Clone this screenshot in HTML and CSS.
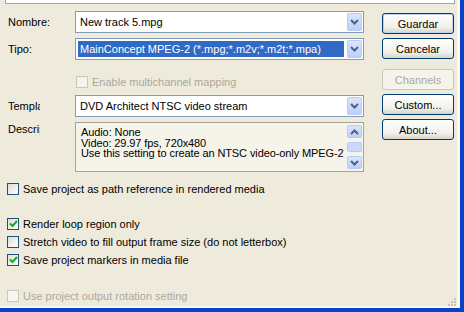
FILE: index.html
```html
<!DOCTYPE html>
<html lang="es">
<head>
    <meta charset="UTF-8">
    <title>Render As</title>
    <link rel="stylesheet" href="styles.css">
</head>
<body>
    <div class="window">
        <div class="prev-field"></div>

        <div class="main">
            <div class="form">
                <div class="row first">
                    <span class="label">Nombre:</span>
                    <div class="combo">
                        <span class="value">New track 5.mpg</span>
                        <span class="drop"><svg width="9" height="6" viewBox="0 0 9 6"><polyline points="1,1 4.5,4.5 8,1" fill="none" stroke="#4d6185" stroke-width="2"/></svg></span>
                    </div>
                </div>
                <div class="row">
                    <span class="label">Tipo:</span>
                    <div class="combo">
                        <span class="value selected">MainConcept MPEG-2 (*.mpg;*.m2v;*.m2t;*.mpa)</span>
                        <span class="drop"><svg width="9" height="6" viewBox="0 0 9 6"><polyline points="1,1 4.5,4.5 8,1" fill="none" stroke="#4d6185" stroke-width="2"/></svg></span>
                    </div>
                </div>
                <div class="check disabled multi">
                    <span class="box"></span>
                    <span>Enable multichannel mapping</span>
                </div>
                <div class="row template">
                    <span class="label"><span class="clip">Template:</span></span>
                    <div class="combo">
                        <span class="value">DVD Architect NTSC video stream</span>
                        <span class="drop"><svg width="9" height="6" viewBox="0 0 9 6"><polyline points="1,1 4.5,4.5 8,1" fill="none" stroke="#4d6185" stroke-width="2"/></svg></span>
                    </div>
                </div>
                <div class="row desc-row">
                    <span class="label"><span class="clip">Description:</span></span>
                    <div class="memo">
                        <div class="memo-text">
                            Audio: None<br>
                            Video: 29.97 fps, 720x480<br>
                            Use this setting to create an NTSC video-only MPEG-2
                        </div>
                        <div class="scroll">
                            <span class="sbtn"><svg width="9" height="6" viewBox="0 0 9 6"><polyline points="1,5 4.5,1.5 8,5" fill="none" stroke="#4d6185" stroke-width="2"/></svg></span>
                            <span class="thumb"></span>
                            <span class="sbtn"><svg width="9" height="6" viewBox="0 0 9 6"><polyline points="1,1 4.5,4.5 8,1" fill="none" stroke="#4d6185" stroke-width="2"/></svg></span>
                        </div>
                    </div>
                </div>
                <div class="check path">
                    <span class="box"></span>
                    <span>Save project as path reference in rendered media</span>
                </div>
            </div>

            <div class="buttons">
                <button class="btn default">Guardar</button>
                <button class="btn">Cancelar</button>
                <button class="btn off">Channels</button>
                <button class="btn">Custom...</button>
                <button class="btn">About...</button>
            </div>
        </div>

        <div class="options">
            <div class="check">
                <span class="box on"><svg width="9" height="8" viewBox="0 0 9 8"><polyline points="1,3.5 3.5,6 8,1" fill="none" stroke="#21a121" stroke-width="2"/></svg></span>
                <span>Render loop region only</span>
            </div>
            <div class="check">
                <span class="box"></span>
                <span>Stretch video to fill output frame size (do not letterbox)</span>
            </div>
            <div class="check">
                <span class="box on"><svg width="9" height="8" viewBox="0 0 9 8"><polyline points="1,3.5 3.5,6 8,1" fill="none" stroke="#21a121" stroke-width="2"/></svg></span>
                <span>Save project markers in media file</span>
            </div>
            <div class="check disabled rotation">
                <span class="box"></span>
                <span>Use project output rotation setting</span>
            </div>
        </div>

        <div class="grip">
            <svg width="10" height="10" viewBox="0 0 10 10" fill="#c4c1b3">
                <rect x="7" y="1" width="2" height="2"/>
                <rect x="4" y="4" width="2" height="2"/><rect x="7" y="4" width="2" height="2"/>
                <rect x="1" y="7" width="2" height="2"/><rect x="4" y="7" width="2" height="2"/><rect x="7" y="7" width="2" height="2"/>
            </svg>
        </div>
    </div>
</body>
</html>
```

FILE: styles.css
```css
body {
    margin: 0;
    font-family: 'Liberation Sans', Arial, sans-serif;
    font-size: 11px;
    color: #000;
    background-color: #0842c8;
}
.window {
    position: relative;
    box-sizing: border-box;
    width: 464px;
    height: 312px;
    background-color: #eeebdd;
    border-right: 4px solid #0842c8;
    border-bottom: 4px solid #0842c8;
    box-shadow: inset -3px -2px 0 #faf8f0;
    overflow: hidden;
}
.prev-field {
    width: 448px;
    height: 3px;
    margin-left: 5px;
    background: #fff;
    border: 1px solid #a5a49c;
    border-top: none;
}
.main {
    display: flex;
}
.form {
    width: 364px;
}
.row {
    display: flex;
    align-items: center;
    height: 22px;
    margin-top: 5px;
}
.row.first {
    margin-top: 7px;
}
.label {
    width: 75px;
    padding-left: 8px;
    box-sizing: border-box;
    white-space: nowrap;
    flex-shrink: 0;
}
.label .clip {
    display: block;
    width: 32px;
    overflow: hidden;
}
.combo {
    flex: 1;
    height: 22px;
    box-sizing: border-box;
    border: 1px solid #7f9db9;
    background: #fff;
    display: flex;
    align-items: center;
    padding: 1px;
}
.combo .value {
    flex: 1;
    padding-left: 3px;
    line-height: 16px;
    white-space: nowrap;
}
.combo .value.selected {
    margin-left: 1px;
    margin-right: 3px;
    padding-left: 2px;
    background: #316ac5;
    color: #fff;
}
.drop, .sbtn {
    width: 15px;
    height: 18px;
    box-sizing: border-box;
    border: 1px solid #b9cbf3;
    border-radius: 2px;
    background: linear-gradient(#dbe6fd, #bccffa);
    display: flex;
    align-items: center;
    justify-content: center;
}
.check {
    display: flex;
    align-items: center;
    height: 13px;
    gap: 4px;
}
.check .box {
    width: 12px;
    height: 12px;
    box-sizing: border-box;
    border: 1px solid #1c5180;
    background: linear-gradient(135deg, #dcdcd5, #fff);
    display: flex;
    align-items: center;
    justify-content: center;
    flex-shrink: 0;
}
.check.disabled {
    color: #aca899;
}
.check.disabled .box {
    border-color: #cac8bb;
    background: #f5f4ee;
}
.check.multi {
    margin: 15px 0 0 76px;
}
.row.template {
    margin-top: 7px;
}
.row.desc-row {
    height: 50px;
    align-items: flex-start;
}
.desc-row .label {
    padding-top: 1px;
}
.memo {
    flex: 1;
    height: 50px;
    box-sizing: border-box;
    border: 1px solid #a5a49c;
    background: #f5f3ea;
    display: flex;
}
.memo-text {
    flex: 1;
    padding: 4px 0 0 5px;
    line-height: 10.5px;
    letter-spacing: -0.1px;
    white-space: nowrap;
    overflow: hidden;
}
.scroll {
    width: 15px;
    margin: 2px 1px 2px 0;
    display: flex;
    flex-direction: column;
    justify-content: space-between;
}
.scroll .sbtn {
    height: 13px;
}
.scroll .thumb {
    height: 8px;
    border: 1px solid #b9cbf3;
    border-radius: 2px;
    background: #cbdafc;
}
.check.path {
    margin: 10px 0 0 7px;
}
.buttons {
    width: 72px;
    margin-left: 18px;
    padding-top: 9px;
    display: flex;
    flex-direction: column;
}
.btn {
    height: 21px;
    margin-bottom: 4px;
    font-family: 'Liberation Sans', Arial, sans-serif;
    font-size: 11px;
    color: #000;
    border: 1px solid #003c74;
    border-radius: 3px;
    background: linear-gradient(#fff, #f1f0ea 70%, #d8d4c8);
    padding: 0;
}
.btn.default {
    box-shadow: inset 0 0 0 1px #c0d1f5;
}
.btn.off {
    margin-top: 6px;
    color: #aca899;
    border-color: #c9c7ba;
    background: #f5f4ea;
}
.options {
    margin: 22px 0 0 7px;
    display: flex;
    flex-direction: column;
    gap: 5px;
}
.check.rotation {
    margin-top: 18px;
}
.grip {
    position: absolute;
    right: 3px;
    bottom: 1px;
    line-height: 0;
}
```
